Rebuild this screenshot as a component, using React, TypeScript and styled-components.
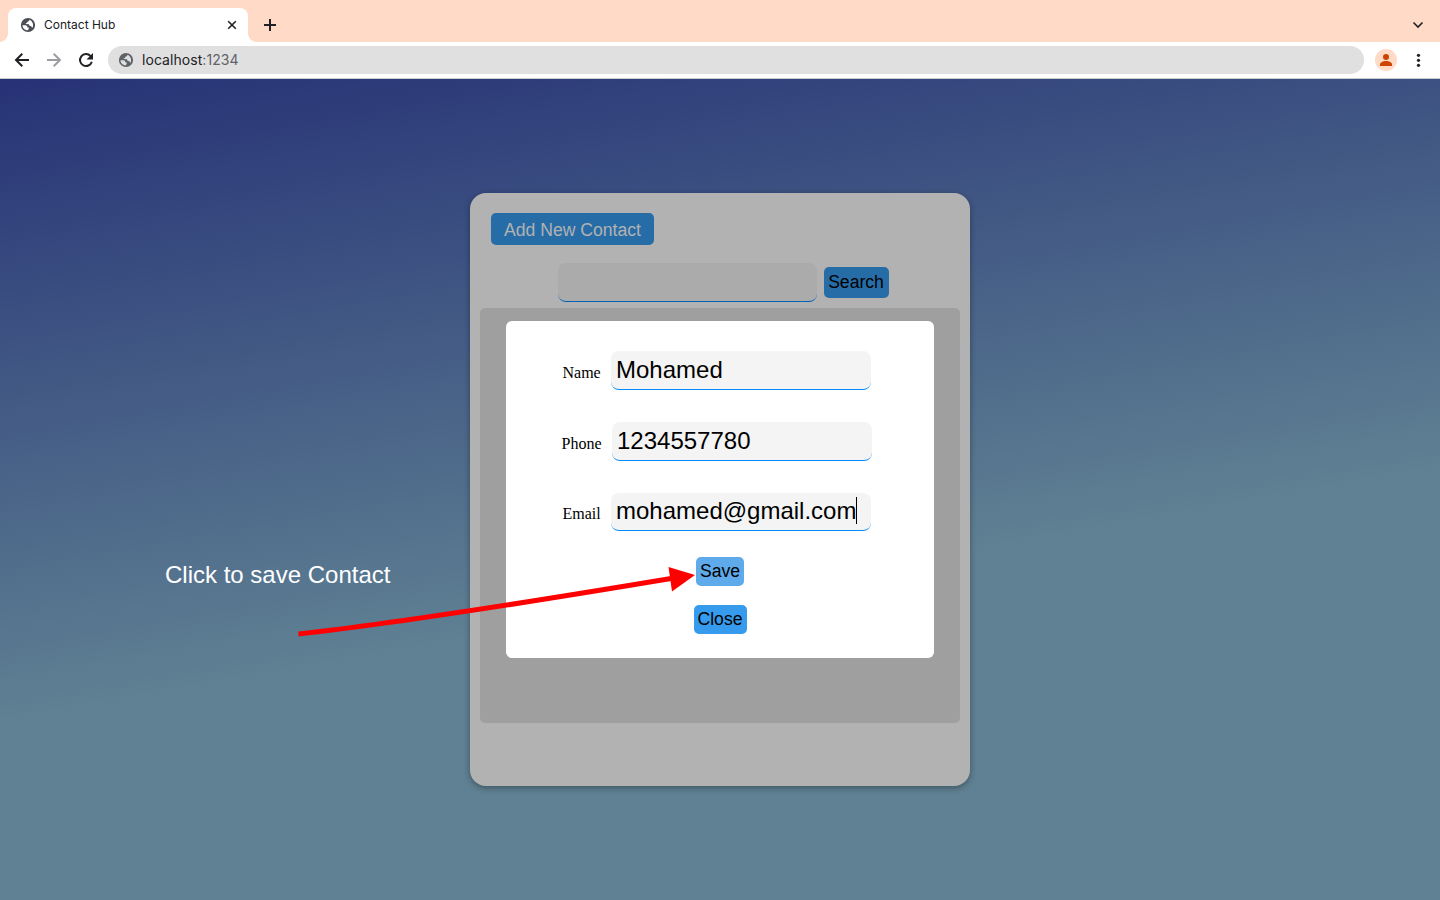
import React from "react";
import styled, { createGlobalStyle } from "styled-components";

const Global = createGlobalStyle`
  * { box-sizing: border-box; }
  html, body { margin: 0; height: 100%; overflow: hidden; }
  #root { height: 100%; }
`;

const Browser = styled.div`
  position: relative;
  display: flex;
  flex-direction: column;
  width: 1440px;
  height: 900px;
  overflow: hidden;
  color: #202124;
  font-family: Inter, Roboto, "Liberation Sans", sans-serif;
`;

const TabStrip = styled.div`
  display: flex;
  align-items: flex-end;
  height: 42px;
  padding-left: 8px;
  background: #ffdac7;
`;

const Tab = styled.div`
  display: flex;
  align-items: center;
  width: 240px;
  height: 34px;
  padding: 0 10px 0 12px;
  background: #fff;
  border-radius: 8px 8px 0 0;
  position: relative;
  &::before, &::after {
    content: "";
    position: absolute;
    bottom: 0;
    width: 8px;
    height: 8px;
  }
  &::before {
    left: -8px;
    background: radial-gradient(circle at 0 0, transparent 7.5px, #fff 8px);
  }
  &::after {
    right: -8px;
    background: radial-gradient(circle at 100% 0, transparent 7.5px, #fff 8px);
  }
`;

const TabTitle = styled.span`
  flex: 1;
  margin-left: 8px;
  padding-bottom: 2px;
  font-size: 12px;
`;

const Icon = styled.svg`
  display: block;
  flex: none;
`;

const NewTab = styled.div`
  margin: 0 auto 9px 14px;
`;

const TabMenu = styled.div`
  margin: 0 14px 9px 0;
`;

const Toolbar = styled.div`
  display: flex;
  align-items: center;
  height: 37px;
  padding: 0 14px 1px 14px;
  border-bottom: 1px solid #c9cbcd;
  background: #fff;
`;

const NavButtons = styled.div`
  display: flex;
  gap: 16px;
`;

const AddressBar = styled.div`
  display: flex;
  align-items: center;
  flex: 1;
  height: 28px;
  margin: 1px 11px 0 14px;
  padding-left: 10px;
  border-radius: 14px;
  background: #e0e0e0;
  font-size: 14px;
  letter-spacing: 0.06px;
`;

const Host = styled.span`
  margin-left: 8px;
  padding-bottom: 2px;
`;

const Port = styled.span`
  padding-bottom: 2px;
  color: #5f6368;
`;

const Avatar = styled.div`
  display: grid;
  place-items: center;
  width: 22px;
  height: 22px;
  margin-right: 13px;
  border-radius: 50%;
  background: #ffdac7;
`;

const Page = styled.main`
  display: flex;
  flex: 1;
  justify-content: center;
  align-items: flex-start;
  padding-top: 114px;
  background: linear-gradient(170deg, #263276 0%, #5f8193 60%, #5f8193 100%);
`;

const Card = styled.section`
  display: flex;
  flex-direction: column;
  align-items: flex-start;
  width: 500px;
  height: 593px;
  padding: 20px 10px 0;
  border-radius: 16px;
  background: #b2b2b2;
  box-shadow: 0 2px 6px rgba(0, 0, 0, 0.35);
`;

const Button = styled.button<{ $w: number; $h: number; $bg: string; $color?: string; $pad?: string }>`
  width: ${(p) => p.$w}px;
  height: ${(p) => p.$h}px;
  padding: ${(p) => p.$pad ?? "0 0 1px"};
  border: 0;
  border-radius: 5px;
  background: ${(p) => p.$bg};
  color: ${(p) => p.$color ?? "#000"};
  font: 17.6px "Liberation Sans", Arial, sans-serif;
  white-space: nowrap;
`;

const AddRow = styled.div`
  display: flex;
  margin-left: 11px;
`;

const SearchRow = styled.div`
  display: flex;
  align-items: flex-start;
  gap: 7px;
  margin: 18px 0 6px 78px;
  ${Button} { margin-top: 4px; }
`;

const Field = styled.div<{ $dim?: boolean; $w?: number; $h?: number }>`
  display: flex;
  align-items: center;
  width: ${(p) => p.$w ?? 260}px;
  height: ${(p) => p.$h ?? 39}px;
  padding: 0 5px 1px;
  border-bottom: 1px solid ${(p) => (p.$dim ? "#0062b3" : "#008cff")};
  border-radius: 8px;
  background: ${(p) => (p.$dim ? "#ababab" : "#f4f4f4")};
  color: #000;
  font: 24px "Liberation Sans", Arial, sans-serif;
`;

const Caret = styled.span`
  width: 1px;
  height: 27px;
  margin-bottom: 2px;
  background: #000;
`;

const ContactList = styled.div`
  display: flex;
  justify-content: center;
  align-items: flex-start;
  width: 480px;
  height: 415px;
  padding-top: 13px;
  border-radius: 5px;
  background: #9f9f9f;
`;

const Modal = styled.form`
  display: flex;
  flex-direction: column;
  align-items: center;
  width: 428px;
  height: 337px;
  padding-top: 30px;
  border-radius: 6px;
  background: #fff;
`;

const FormRow = styled.div<{ $indent: number; $gap: number }>`
  display: flex;
  align-self: flex-start;
  align-items: flex-start;
  height: 39px;
  margin: 0 0 ${(p) => p.$gap}px ${(p) => p.$indent}px;
`;

const Label = styled.label<{ $w: number; $top?: number }>`
  width: ${(p) => p.$w}px;
  padding-top: ${(p) => p.$top ?? 12}px;
  color: #000;
  font: 16px/20px "Liberation Serif", "Times New Roman", serif;
`;

const Actions = styled.div`
  display: flex;
  flex-direction: column;
  align-items: center;
  gap: 19px;
`;

const Note = styled.div`
  position: absolute;
  left: 165px;
  top: 561px;
  color: #fff;
  font: 24px/28px "Liberation Sans", Arial, sans-serif;
  white-space: nowrap;
`;

const Arrow = styled.svg`
  position: absolute;
  left: 290px;
  top: 560px;
`;

const Globe = ({ color, hole }: { color: string; hole: string }) => (
  <Icon width="16" height="16" viewBox="0 0 16 16">
    <circle cx="8" cy="8" r="7.1" fill={color} />
    <path
      d="M2.5 8.2H5.2C6.7 8.2 7.4 9 7.2 10.2L8.7 10.5V11.9L7.8 13.3C4.8 13.1 2.5 11.1 2.5 8.200ZM9.4 2.8C9.5 4.100 8.8 4.5 7.3 4.700L7.100 6 5.8 6.3V7.100L8.9 7.3 9.7 9.100H11.2L11.8 10.6H12.6C14 7.5 12.4 4 9.4 2.800Z"
      fill={hole}
    />
  </Icon>
);

const stroke = { fill: "none", strokeWidth: 2 };

export default function App() {
  return (
    <Browser>
      <Global />
      <TabStrip>
        <Tab>
          <Globe color="#4b4e55" hole="#fff" />
          <TabTitle>Contact Hub</TabTitle>
          <Icon width="12" height="12" viewBox="0 0 12 12">
            <path d="M2.2 2.2 9.8 9.8M9.8 2.2 2.2 9.8" stroke="#202124" fill="none" strokeWidth="1.6" />
          </Icon>
        </Tab>
        <NewTab>
          <Icon width="16" height="16" viewBox="0 0 16 16">
            <path d="M8 2V14M2 8H14" stroke="#202124" {...stroke} />
          </Icon>
        </NewTab>
        <TabMenu>
          <Icon width="16" height="16" viewBox="0 0 16 16">
            <path d="M3.5 5.5 8 10 12.5 5.5" stroke="#202124" fill="none" strokeWidth="1.6" />
          </Icon>
        </TabMenu>
      </TabStrip>
      <Toolbar>
        <NavButtons>
          <Icon width="16" height="16" viewBox="0 0 16 16">
            <path d="M15 8H2.5M8.3 1.7 2 8 8.3 14.3" stroke="#202124" {...stroke} />
          </Icon>
          <Icon width="16" height="16" viewBox="0 0 16 16">
            <path d="M1 8H13.5M7.7 1.7 14 8 7.7 14.3" stroke="#9b9da0" {...stroke} />
          </Icon>
          <Icon width="16" height="16" viewBox="0 0 16 16">
            <path d="M12.5 4A6 6 0 1 0 13.8 9.7" stroke="#202124" {...stroke} />
            <path d="M15 1V7.5H8.5Z" fill="#202124" />
          </Icon>
        </NavButtons>
        <AddressBar>
          <Globe color="#5f6368" hole="#e0e0e0" />
          <Host>localhost</Host>
          <Port>:1234</Port>
        </AddressBar>
        <Avatar>
          <Icon width="14" height="14" viewBox="0 0 14 14">
            <circle cx="7" cy="4" r="3" fill="#cc4400" />
            <path d="M1 13V11.5C1 9.2 4 8 7 8S13 9.2 13 11.5V13Z" fill="#cc4400" />
          </Icon>
        </Avatar>
        <Icon width="16" height="16" viewBox="0 0 16 16">
          <circle cx="8.5" cy="3.3" r="1.6" fill="#202124" />
          <circle cx="8.5" cy="8.3" r="1.6" fill="#202124" />
          <circle cx="8.5" cy="13.3" r="1.6" fill="#202124" />
        </Icon>
      </Toolbar>
      <Page>
        <Card>
          <AddRow>
            <Button $w={163} $h={32} $bg="#266da8" $color="#b2b2b2" $pad="2px 0 0">Add New Contact</Button>
          </AddRow>
          <SearchRow>
            <Field $dim $w={259} />
            <Button $w={65} $h={31} $bg="#266da8" $pad="0 1px 1px 0">Search</Button>
          </SearchRow>
          <ContactList>
            <Modal>
              <FormRow $indent={56.5} $gap={32}>
                <Label $w={48.5}>Name</Label>
                <Field>Mohamed</Field>
              </FormRow>
              <FormRow $indent={55.5} $gap={32}>
                <Label $w={50.5}>Phone</Label>
                <Field>1234557780</Field>
              </FormRow>
              <FormRow $indent={56.5} $gap={25}>
                <Label $w={48.5} $top={11}>Email</Label>
                <Field $h={38}>mohamed@gmail.com<Caret /></Field>
              </FormRow>
              <Actions>
                <Button type="button" $w={48} $h={29} $bg="#5eaaea">Save</Button>
                <Button type="button" $w={53} $h={29} $bg="#369bec">Close</Button>
              </Actions>
            </Modal>
          </ContactList>
        </Card>
      </Page>
      <Note>Click to save Contact</Note>
      <Arrow width="410" height="80" viewBox="290 560 410 80">
        <path d="M298.5 634C400 623 560 597 674 578" fill="none" stroke="#f00" strokeWidth="5" />
        <path d="M695 575 668.5 567 672 591.5Z" fill="#f00" />
      </Arrow>
    </Browser>
  );
}
